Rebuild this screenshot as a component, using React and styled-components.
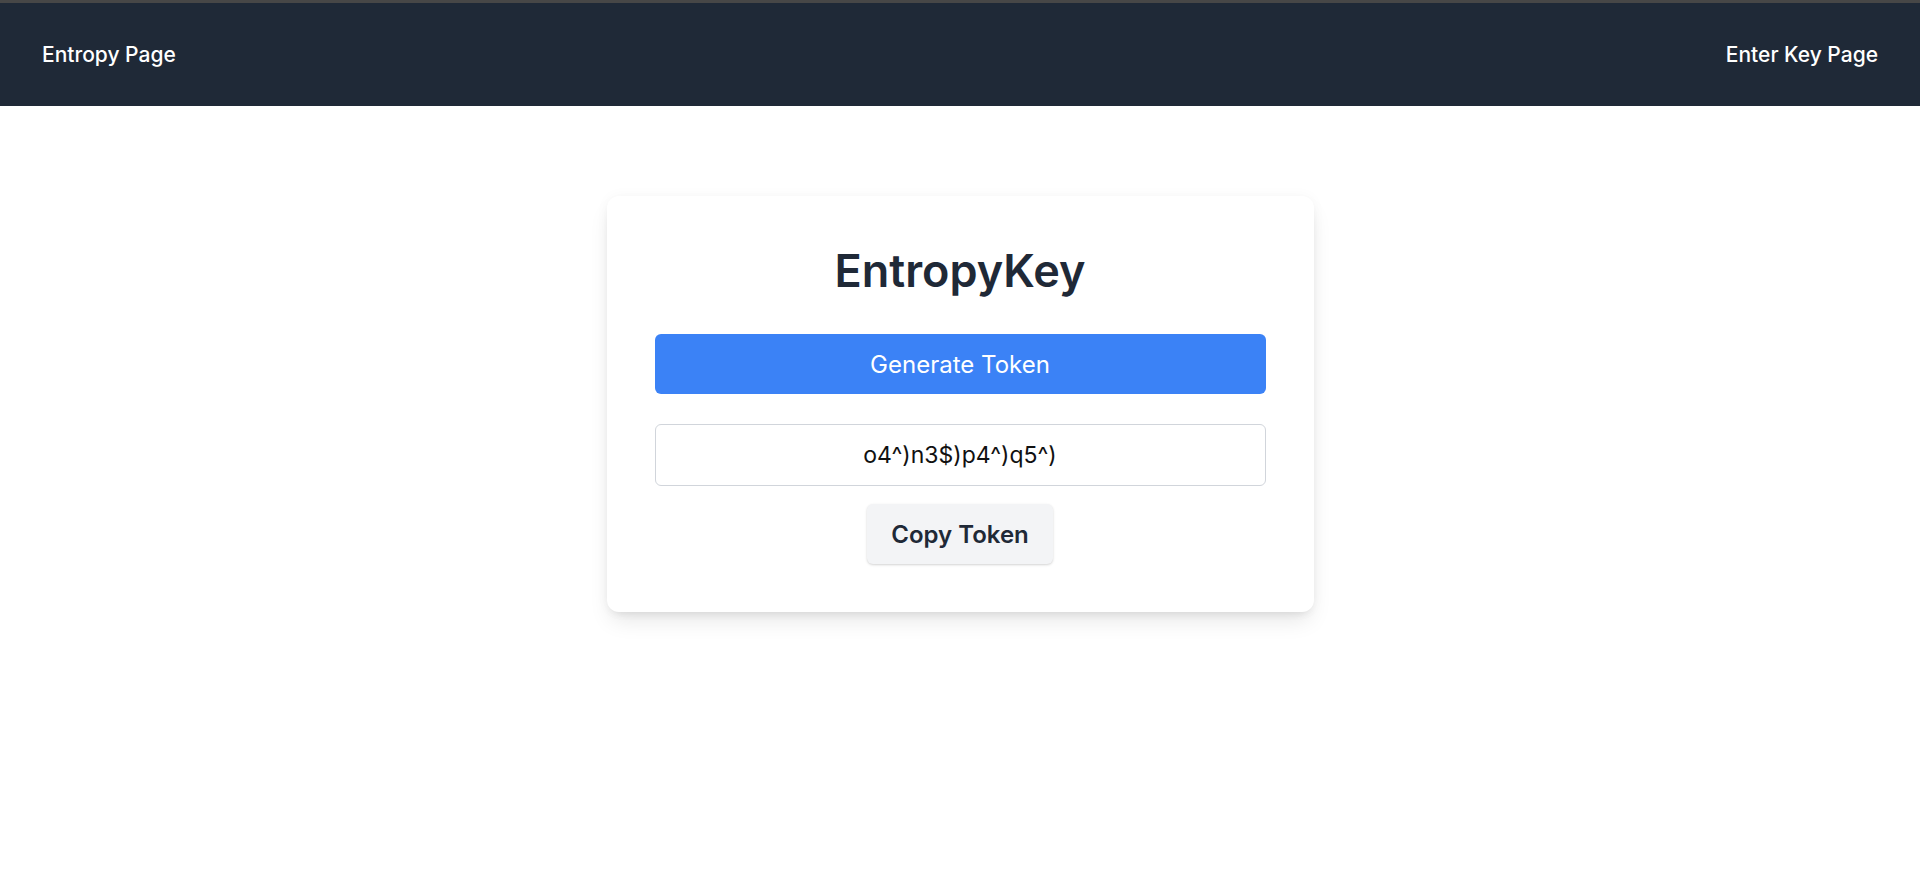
import React, { useState } from 'react';
import styled, { createGlobalStyle } from 'styled-components';

const GlobalStyle = createGlobalStyle`
  html, body {
    margin: 0;
    padding: 0;
    background: #ffffff;
    font-family: Inter, "Noto Sans", sans-serif;
  }

  * {
    box-sizing: border-box;
  }
`;

const Page = styled.div`
  min-height: 888px;
  border-top: 3px solid #474747;
`;

const NavBar = styled.nav`
  display: flex;
  align-items: center;
  justify-content: space-between;
  height: 103px;
  padding: 0 42px;
  background: #1f2937;
`;

const NavLink = styled.a`
  color: #ffffff;
  font-size: 21px;
  font-weight: 500;
  text-decoration: none;
  cursor: pointer;
`;

const Main = styled.main`
  display: flex;
  justify-content: center;
  padding-top: 90px;
`;

const Card = styled.section`
  display: flex;
  flex-direction: column;
  align-items: center;
  width: 707px;
  padding: 48px;
  background: #ffffff;
  border-radius: 12px;
  box-shadow: 0 12px 22px -4px rgba(0, 0, 0, 0.1), 0 5px 10px -5px rgba(0, 0, 0, 0.1),
    0 0 14px rgba(0, 0, 0, 0.035);
`;

const Title = styled.h1`
  margin: 0 0 36px;
  font-size: 45px;
  line-height: 54px;
  font-weight: 600;
  color: #1f2937;
`;

const PrimaryButton = styled.button`
  width: 100%;
  height: 60px;
  border: none;
  border-radius: 6px;
  background: #3b82f6;
  color: #ffffff;
  font-family: Inter, sans-serif;
  font-size: 24px;
  font-weight: 400;
  cursor: pointer;
`;

const TokenInput = styled.input`
  width: 100%;
  height: 62px;
  margin-top: 30px;
  border: 1px solid #d1d5db;
  border-radius: 6px;
  text-align: center;
  font-family: Inter, sans-serif;
  font-size: 23px;
  color: #111111;
  outline: none;
`;

const SecondaryButton = styled.button`
  height: 60px;
  margin-top: 18px;
  padding: 0 24px;
  border: none;
  border-radius: 6px;
  background: #f3f4f6;
  color: #1f2937;
  font-family: Inter, sans-serif;
  font-size: 24px;
  font-weight: 600;
  box-shadow: 0 1px 3px rgba(0, 0, 0, 0.12), 0 1px 2px rgba(0, 0, 0, 0.06);
  cursor: pointer;
`;

const App = () => {
  const [token] = useState('o4^)n3$)p4^)q5^)');

  return (
    <>
      <GlobalStyle />
      <Page>
        <NavBar>
          <NavLink>Entropy Page</NavLink>
          <NavLink>Enter Key Page</NavLink>
        </NavBar>

        <Main>
          <Card>
            <Title>EntropyKey</Title>
            <PrimaryButton>Generate Token</PrimaryButton>
            <TokenInput type="text" value={token} readOnly />
            <SecondaryButton>Copy Token</SecondaryButton>
          </Card>
        </Main>
      </Page>
    </>
  );
};

export default App;
